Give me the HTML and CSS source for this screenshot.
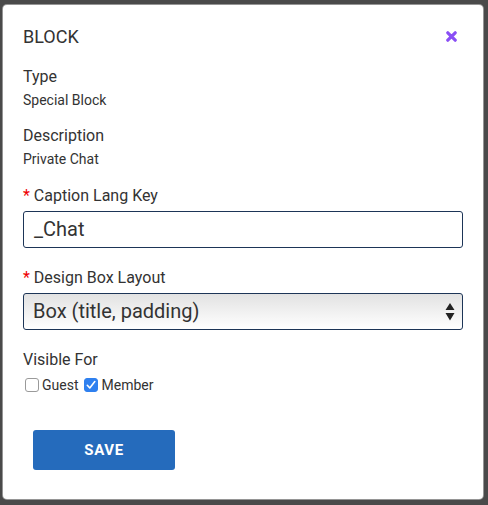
FILE: index.html
```html
<!DOCTYPE html>
<html>
<head>
<meta charset="utf-8">
<link rel="stylesheet" href="styles.css">
</head>
<body>
<div class="dialog">
  <div class="header">
    <div class="title">BLOCK</div>
    <svg class="close" width="11" height="11" viewBox="0 0 11 11"><path d="M1.8 1.8 L9.2 9.2 M9.2 1.8 L1.8 9.2" stroke="#8a4ff5" stroke-width="3.2" stroke-linecap="round"/></svg>
  </div>
  <div class="group g-type">
    <div class="label">Type</div>
    <div class="value">Special Block</div>
  </div>
  <div class="group g-desc">
    <div class="label">Description</div>
    <div class="value">Private Chat</div>
  </div>
  <div class="group g-caption">
    <div class="label"><span class="req">*</span> Caption Lang Key</div>
    <div class="input">_Chat</div>
  </div>
  <div class="group g-layout">
    <div class="label"><span class="req">*</span> Design Box Layout</div>
    <div class="select">
      <span>Box (title, padding)</span>
      <svg class="arrows" width="10" height="18" viewBox="0 0 10 18"><path d="M5 0 L9.5 7 L0.5 7 Z M0.5 10 L9.5 10 L5 17.5 Z" fill="#222"/></svg>
    </div>
  </div>
  <div class="group g-visible">
    <div class="label">Visible For</div>
    <div class="checks">
      <span class="box"></span><span class="ctext">Guest</span>
      <span class="box checked"><svg width="14" height="14" viewBox="0 0 14 14"><path d="M3.3 7.3 L5.8 10 L10.8 3.6" fill="none" stroke="#fff" stroke-width="1.6" stroke-linecap="round" stroke-linejoin="round"/></svg></span><span class="ctext">Member</span>
    </div>
  </div>
  <div class="actions">
    <button class="save">SAVE</button>
  </div>
</div>
</body>
</html>
```
FILE: styles.css
```css
html, body {
  margin: 0;
  padding: 0;
}
body {
  background: #4a4a4a;
  font-family: Roboto, "Liberation Sans", sans-serif;
  color: #333;
  width: 488px;
  height: 505px;
  overflow: hidden;
  padding-top: 5px;
  box-sizing: border-box;
}
.dialog {
  margin-left: 3px;
  width: 480px;
  height: 494px;
  box-sizing: border-box;
  background: #fff;
  border-radius: 4px;
  padding: 20px 20px 0 20px;
  box-shadow: 0 0 0 1px rgba(200,200,200,0.6);
}
.header {
  display: flex;
  align-items: center;
  justify-content: space-between;
}
.title {
  font-size: 18px;
  line-height: 24px;
}
.close {
  margin-right: 6px;
  margin-top: -1px;
}
.label {
  font-size: 16px;
  line-height: 20px;
}
.value {
  font-size: 14px;
  line-height: 20px;
  margin-top: 3px;
}
.req {
  color: #e00;
}
.g-type { margin-top: 18px; }
.g-desc { margin-top: 16px; }
.g-caption { margin-top: 17px; }
.g-layout { margin-top: 20px; }
.g-visible { margin-top: 20px; }
.input {
  margin-top: 5px;
  height: 37px;
  box-sizing: border-box;
  border: 1px solid #1d3557;
  border-radius: 3px;
  font-size: 20px;
  line-height: 35px;
  padding-left: 10px;
  color: #333;
}
.select {
  margin-top: 5px;
  height: 37px;
  box-sizing: border-box;
  border: 1px solid #1d3557;
  border-radius: 3px;
  font-size: 20px;
  line-height: 35px;
  padding-left: 9px;
  padding-right: 7px;
  display: flex;
  align-items: center;
  justify-content: space-between;
  background: linear-gradient(#e2e2e2, #ffffff);
  color: #333;
}
.arrows {
  display: block;
}
.checks {
  margin-top: 5px;
  display: flex;
  align-items: center;
  font-size: 14px;
  line-height: 20px;
}
.box {
  width: 14px;
  height: 14px;
  box-sizing: border-box;
  border: 1px solid #9a9a9a;
  border-radius: 3px;
  margin-left: 2px;
  display: inline-flex;
}
.box.checked {
  background: #2f80ef;
  border-color: #2f80ef;
  margin-left: 6px;
}
.box.checked svg {
  margin: -1px;
}
.ctext {
  margin-left: 3px;
  color: #333;
}
.actions {
  margin-top: 35px;
  padding-left: 10px;
}
.save {
  width: 142px;
  height: 40px;
  border: none;
  border-radius: 3px;
  background: #256bbc;
  color: #fff;
  font-family: Roboto, "Liberation Sans", sans-serif;
  font-weight: bold;
  font-size: 15px;
  letter-spacing: 0.6px;
  padding: 0;
}
```
